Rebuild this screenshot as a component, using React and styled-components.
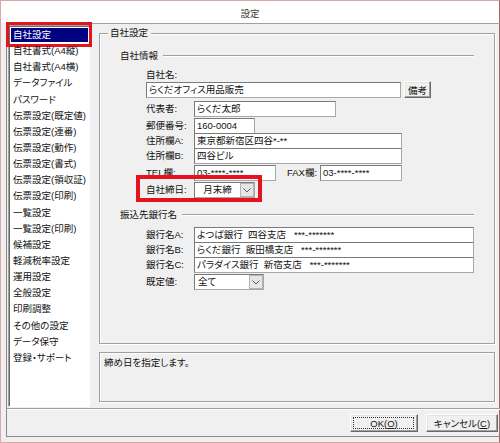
import React from 'react';
import styled, { createGlobalStyle } from 'styled-components';

const FONT = `"Liberation Sans", "Noto Sans CJK JP", sans-serif`;

const GlobalStyle = createGlobalStyle`
  html, body { margin: 0; padding: 0; background: #ffffff; }
  body { font-family: ${FONT}; font-size: 9.5px; color: #111; }
  * { box-sizing: border-box; }
`;

const Window = styled.div`
  width: 500px;
  height: 443px;
  border: 1px solid #dca6ab;
  border-right-color: #a8636a;
  background: #f0f0f0;
  display: flex;
  flex-direction: column;
  font-feature-settings: "palt" 1;
`;

const TitleBar = styled.div`
  height: 22px;
  flex: none;
  background: #ffffff;
  display: flex;
  align-items: center;
  justify-content: center;
  padding-top: 2px;
  font-size: 9.5px;
  color: #3a3a3a;
`;

const Client = styled.div`
  flex: 1;
  display: flex;
  padding: 0 5px 5px 5px;
  min-height: 0;
`;

const Frame = styled.div`
  flex: 1;
  display: flex;
  flex-direction: column;
  border: 1px solid #8a8a8a;
  border-top-color: #a0a0a0;
`;

const TopPanel = styled.div`
  flex: 1;
  display: flex;
  padding: 1px 0 0 1px;
  min-height: 0;
`;

const ListBox = styled.div`
  width: 82px;
  flex: none;
  background: #ffffff;
  border: 1px solid;
  border-color: #a0a0a0 #ffffff #ffffff #a0a0a0;
  box-shadow: inset 1px 1px 0 #696969;
  padding: 2px 1px 0 2px;
  margin-bottom: 1px;
`;

const ListItem = styled.div`
  position: relative;
  height: 16.15px;
`;

const ItemLabel = styled.div`
  height: 14px;
  line-height: 14px;
  padding-left: 2px;
  white-space: nowrap;
  background: ${p => (p.$selected ? '#000080' : 'transparent')};
  color: ${p => (p.$selected ? '#ffffff' : 'inherit')};
`;

const Callout = styled.div`
  position: absolute;
  left: ${p => p.$l}px;
  top: ${p => p.$t}px;
  width: ${p => p.$w}px;
  height: ${p => p.$h}px;
  border: ${p => p.$b}px solid #e3141e;
  pointer-events: none;
`;

const RightPane = styled.div`
  flex: 1;
  display: flex;
  flex-direction: column;
  gap: 8px;
  padding: 1px 8px 6px 9px;
  min-width: 0;
`;

const GroupBox = styled.fieldset`
  flex: 1;
  margin: 0;
  padding: 0;
  min-width: 0;
  border: 1px solid #a0a0a0;
  box-shadow: inset 1px 1px 0 #ffffff, 1px 1px 0 #ffffff;
`;

const GroupLegend = styled.legend`
  margin-left: 8px;
  padding: 0 3px 0 2px;
  line-height: 14px;
  background: #f0f0f0;
`;

const GroupBody = styled.div`
  padding: 1px 20px 0 20px;
`;

const SectionHeader = styled.div`
  display: flex;
  align-items: center;
  gap: 5px;
  height: 13px;
  margin-top: ${p => p.$mt}px;
`;

const SectionTitle = styled.span`
  white-space: nowrap;
  line-height: 13px;
`;

const SectionRule = styled.div`
  flex: 1;
  height: 2px;
  border-top: 1px solid #a0a0a0;
  border-bottom: 1px solid #ffffff;
`;

const FieldRow = styled.div`
  position: relative;
  display: flex;
  align-items: center;
  height: ${p => p.$h || 16}px;
  margin-top: ${p => p.$mt || 0}px;
  padding-left: 26px;
`;

const FieldLabel = styled.span`
  width: ${p => p.$w || 48}px;
  margin-left: ${p => p.$ml || 0}px;
  flex: none;
  line-height: 12px;
  white-space: nowrap;
`;

const TextBox = styled.div`
  width: ${p => p.$w}px;
  height: 16px;
  flex: none;
  background: #ffffff;
  border: 1px solid;
  border-color: #7a7a7a #a8a8a8 #a8a8a8 #7a7a7a;
  padding-left: 2px;
  line-height: 14px;
  white-space: pre;
  overflow: hidden;
`;

const Select = styled.div`
  width: ${p => p.$w}px;
  height: 16px;
  flex: none;
  display: flex;
  background: #ffffff;
  border: 1px solid;
  border-color: #7a7a7a #a8a8a8 #a8a8a8 #7a7a7a;
`;

const SelectValue = styled.span`
  flex: 1;
  line-height: 14px;
  text-align: ${p => p.$align || 'left'};
  padding-left: ${p => (p.$align === 'center' ? 0 : 3)}px;
  white-space: nowrap;
`;

const DropButton = styled.span`
  width: 14px;
  flex: none;
  display: flex;
  align-items: center;
  justify-content: center;
  background: #e6e6e6;
  border: 1px solid #b4b4b4;
`;

const PushButton = styled.div`
  position: relative;
  width: ${p => p.$w}px;
  height: ${p => p.$h}px;
  flex: none;
  margin-left: ${p => p.$ml || 0}px;
  display: flex;
  align-items: center;
  justify-content: center;
  background: #f0f0f0;
  border: 1px solid;
  border-color: #ffffff #696969 #696969 #ffffff;
  box-shadow: inset -1px -1px 0 #a0a0a0, inset 1px 1px 0 #e3e3e3;
  font-size: 9.5px;
  white-space: nowrap;
`;

const FocusRing = styled.span`
  position: absolute;
  inset: 2px 3px 2px 2px;
  border: 1px dotted #303030;
  pointer-events: none;
`;

const Mnemonic = styled.span`
  text-decoration: underline;
`;

const DescBox = styled.div`
  height: 50px;
  flex: none;
  border: 1px solid #a0a0a0;
  box-shadow: inset 1px 1px 0 #ffffff, 1px 1px 0 #ffffff;
  padding: 3px 4px;
  line-height: 13px;
`;

const BottomBar = styled.div`
  height: 28px;
  flex: none;
  display: flex;
  align-items: center;
  justify-content: flex-end;
  gap: 8px;
  padding: 1px 5px 0 0;
  border-top: 1px solid #a0a0a0;
  box-shadow: inset 0 1px 0 #ffffff;
`;

const Chevron = () => (
  <svg width="8" height="5" viewBox="0 0 8 5">
    <polyline points="0.5,0.5 4,4 7.5,0.5" fill="none" stroke="#5a5a5a" strokeWidth="1" />
  </svg>
);

const items = [
  '自社設定',
  '自社書式(A4縦)',
  '自社書式(A4横)',
  'データファイル',
  'パスワード',
  '伝票設定(既定値)',
  '伝票設定(連番)',
  '伝票設定(動作)',
  '伝票設定(書式)',
  '伝票設定(領収証)',
  '伝票設定(印刷)',
  '一覧設定',
  '一覧設定(印刷)',
  '候補設定',
  '軽減税率設定',
  '運用設定',
  '全般設定',
  '印刷調整',
  'その他の設定',
  'データ保守',
  '登録・サポート',
];

const banks = [
  { label: '銀行名A:', value: 'よつば銀行  四谷支店   ***-*******', mt: 6 },
  { label: '銀行名B:', value: 'らくだ銀行  飯田橋支店   ***-*******', mt: -1 },
  { label: '銀行名C:', value: 'パラダイス銀行  新宿支店   ***-*******', mt: -1 },
];

export default function App() {
  return (
    <>
      <GlobalStyle />
      <Window>
        <TitleBar>設定</TitleBar>
        <Client>
          <Frame>
            <TopPanel>
              <ListBox>
                {items.map((t, i) => (
                  <ListItem key={t}>
                    <ItemLabel $selected={i === 0}>{t}</ItemLabel>
                    {i === 0 && <Callout $l={-5} $t={-6} $w={86} $h={25} $b={3.5} />}
                  </ListItem>
                ))}
              </ListBox>
              <RightPane>
                <GroupBox>
                  <GroupLegend>自社設定</GroupLegend>
                  <GroupBody>
                    <SectionHeader $mt={8}>
                      <SectionTitle>自社情報</SectionTitle>
                      <SectionRule />
                    </SectionHeader>

                    <FieldRow $h={13} $mt={6}>
                      <FieldLabel>自社名:</FieldLabel>
                    </FieldRow>
                    <FieldRow $h={17}>
                      <TextBox $w={255}>らくだオフィス用品販売</TextBox>
                      <PushButton $w={27} $h={17} $ml={3}>備考</PushButton>
                    </FieldRow>

                    <FieldRow $mt={3}>
                      <FieldLabel>代表者:</FieldLabel>
                      <TextBox $w={142}>らくだ太郎</TextBox>
                    </FieldRow>
                    <FieldRow $mt={1}>
                      <FieldLabel>郵便番号:</FieldLabel>
                      <TextBox $w={61}>160-0004</TextBox>
                    </FieldRow>
                    <FieldRow $mt={-1}>
                      <FieldLabel>住所欄A:</FieldLabel>
                      <TextBox $w={208}>東京都新宿区四谷*-**</TextBox>
                    </FieldRow>
                    <FieldRow $mt={-1}>
                      <FieldLabel>住所欄B:</FieldLabel>
                      <TextBox $w={208}>四谷ビル</TextBox>
                    </FieldRow>
                    <FieldRow $mt={1}>
                      <FieldLabel>TEL欄:</FieldLabel>
                      <TextBox $w={82}>03-****-****</TextBox>
                      <FieldLabel $w={33} $ml={11}>FAX欄:</FieldLabel>
                      <TextBox $w={82}>03-****-****</TextBox>
                    </FieldRow>
                    <FieldRow $mt={1}>
                      <FieldLabel>自社締日:</FieldLabel>
                      <Select $w={61}>
                        <SelectValue $align="center">月末締</SelectValue>
                        <DropButton><Chevron /></DropButton>
                      </Select>
                      <Callout $l={16} $t={-7} $w={126} $h={27} $b={4} />
                    </FieldRow>

                    <SectionHeader $mt={10}>
                      <SectionTitle>振込先銀行名</SectionTitle>
                      <SectionRule />
                    </SectionHeader>

                    {banks.map(b => (
                      <FieldRow key={b.label} $mt={b.mt}>
                        <FieldLabel>{b.label}</FieldLabel>
                        <TextBox $w={280}>{b.value}</TextBox>
                      </FieldRow>
                    ))}
                    <FieldRow $mt={1}>
                      <FieldLabel>既定値:</FieldLabel>
                      <Select $w={70}>
                        <SelectValue>全て</SelectValue>
                        <DropButton><Chevron /></DropButton>
                      </Select>
                    </FieldRow>
                  </GroupBody>
                </GroupBox>
                <DescBox>締め日を指定します。</DescBox>
              </RightPane>
            </TopPanel>
            <BottomBar>
              <PushButton $w={68} $h={18}>
                OK(<Mnemonic>O</Mnemonic>)
                <FocusRing />
              </PushButton>
              <PushButton $w={72} $h={18}>
                キャンセル(<Mnemonic>C</Mnemonic>)
              </PushButton>
            </BottomBar>
          </Frame>
        </Client>
      </Window>
    </>
  );
}
